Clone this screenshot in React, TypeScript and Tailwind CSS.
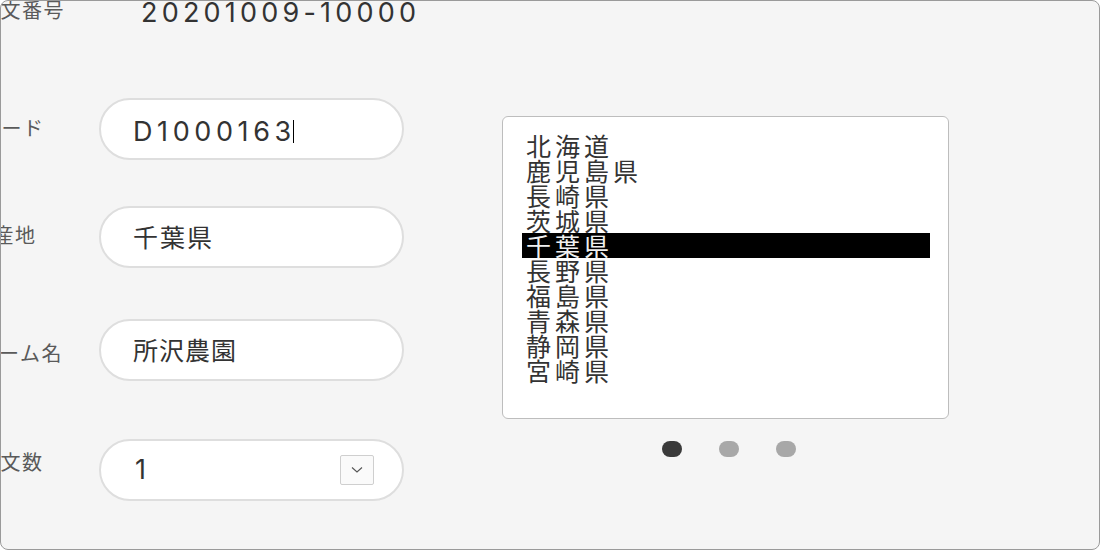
import React from "react";

const jp = { fontFamily: '"Noto Sans CJK JP", "Noto Sans", sans-serif' };
const lat = { fontFamily: 'Inter, "Noto Sans CJK JP", sans-serif' };

const prefectures = [
  "北海道",
  "鹿児島県",
  "長崎県",
  "茨城県",
  "千葉県",
  "長野県",
  "福島県",
  "青森県",
  "静岡県",
  "宮崎県",
];

function Label({ text, ml, extra = "" }: { text: string; ml: string; extra?: string }) {
  return (
    <div className="w-[98px] shrink-0 flex items-center">
      <span
        className={`whitespace-nowrap text-[20px] leading-[24px] tracking-[1.5px] text-[#5a5a5a] ${ml} ${extra}`}
        style={jp}
      >
        {text}
      </span>
    </div>
  );
}

function Pill({ children }: { children: React.ReactNode }) {
  return (
    <div className="relative w-[305px] h-[62px] rounded-full border-2 border-[#dedede] bg-white flex items-center pl-[32px] pr-[28px]">
      {children}
    </div>
  );
}

export default function App() {
  return (
    <div className="w-[1100px] h-[550px] overflow-hidden bg-[#f5f5f5] border border-[#9a9a9a] rounded-[8px] flex">
      {/* left form */}
      <div className="w-[403px] shrink-0 flex flex-col">
        <div className="flex items-center h-[26px] -mt-[1px]">
          <Label text="注文番号" ml="-ml-[22px]" extra="-mt-[6px]" />
          <span
            className="ml-[42px] whitespace-nowrap text-[27px] leading-[30px] tracking-[4.2px] text-[#333]"
            style={lat}
          >
            20201009-10000
          </span>
        </div>

        <div className="flex items-center mt-[72px]">
          <Label text="商品コード" ml="-ml-[64px]" extra="-mt-[2px]" />
          <Pill>
            <span
              className="mt-[5px] whitespace-nowrap text-[27px] leading-[32px] tracking-[4.6px] text-[#333]"
              style={lat}
            >
              D1000163
            </span>
            <span className="-ml-[3px] mt-[4px] w-[1px] h-[23px] bg-black" />
          </Pill>
        </div>

        <div className="flex items-center mt-[46px]">
          <Label text="原産地" ml="-ml-[29px]" extra="-mt-[4px]" />
          <Pill>
            <span className="text-[25px] tracking-[2px] text-[#333]" style={jp}>
              千葉県
            </span>
          </Pill>
        </div>

        <div className="flex items-center mt-[51px]">
          <Label text="ファーム名" ml="-ml-[45px]" extra="mt-[6px]" />
          <Pill>
            <span className="text-[25px] tracking-[1px] text-[#333]" style={jp}>
              所沢農園
            </span>
          </Pill>
        </div>

        <div className="flex items-center mt-[58px]">
          <Label text="注文数" ml="-ml-[22px]" extra="-mt-[16px]" />
          <Pill>
            <span className="text-[27px] text-[#333] pl-[2px]" style={lat}>
              1
            </span>
            <div className="ml-auto w-[34px] h-[30px] rounded-[2px] border border-[#cfcfcf] bg-[#fafafa] flex items-center justify-center">
              <svg width="12" height="8" viewBox="0 0 12 8" fill="none">
                <path d="M1 1.5 L6 6 L11 1.5" stroke="#555" strokeWidth="1.1" />
              </svg>
            </div>
          </Pill>
        </div>
      </div>

      {/* right: list + dots */}
      <div className="ml-[98px] mt-[115px] w-[447px] flex flex-col">
        <div className="h-[303px] rounded-[6px] border border-[#bdbdbd] bg-white pt-[16px] pl-[19px]">
          <div className="w-[408px] flex flex-col">
            {prefectures.map((p) => (
              <div
                key={p}
                className={`h-[25px] leading-[25px] pl-[4px] text-[25px] tracking-[4px] whitespace-nowrap ${
                  p === "千葉県" ? "bg-black text-[#f0f0f0]" : "text-[#333]"
                }`}
                style={jp}
              >
                {p}
              </div>
            ))}
          </div>
        </div>
        <div className="mt-[22px] flex justify-center gap-[37px] pl-[6px]">
          <span className="w-[20px] h-[16px] rounded-full bg-[#3a3a3a]" />
          <span className="w-[20px] h-[16px] rounded-full bg-[#a8a8a8]" />
          <span className="w-[20px] h-[16px] rounded-full bg-[#a8a8a8]" />
        </div>
      </div>
    </div>
  );
}
